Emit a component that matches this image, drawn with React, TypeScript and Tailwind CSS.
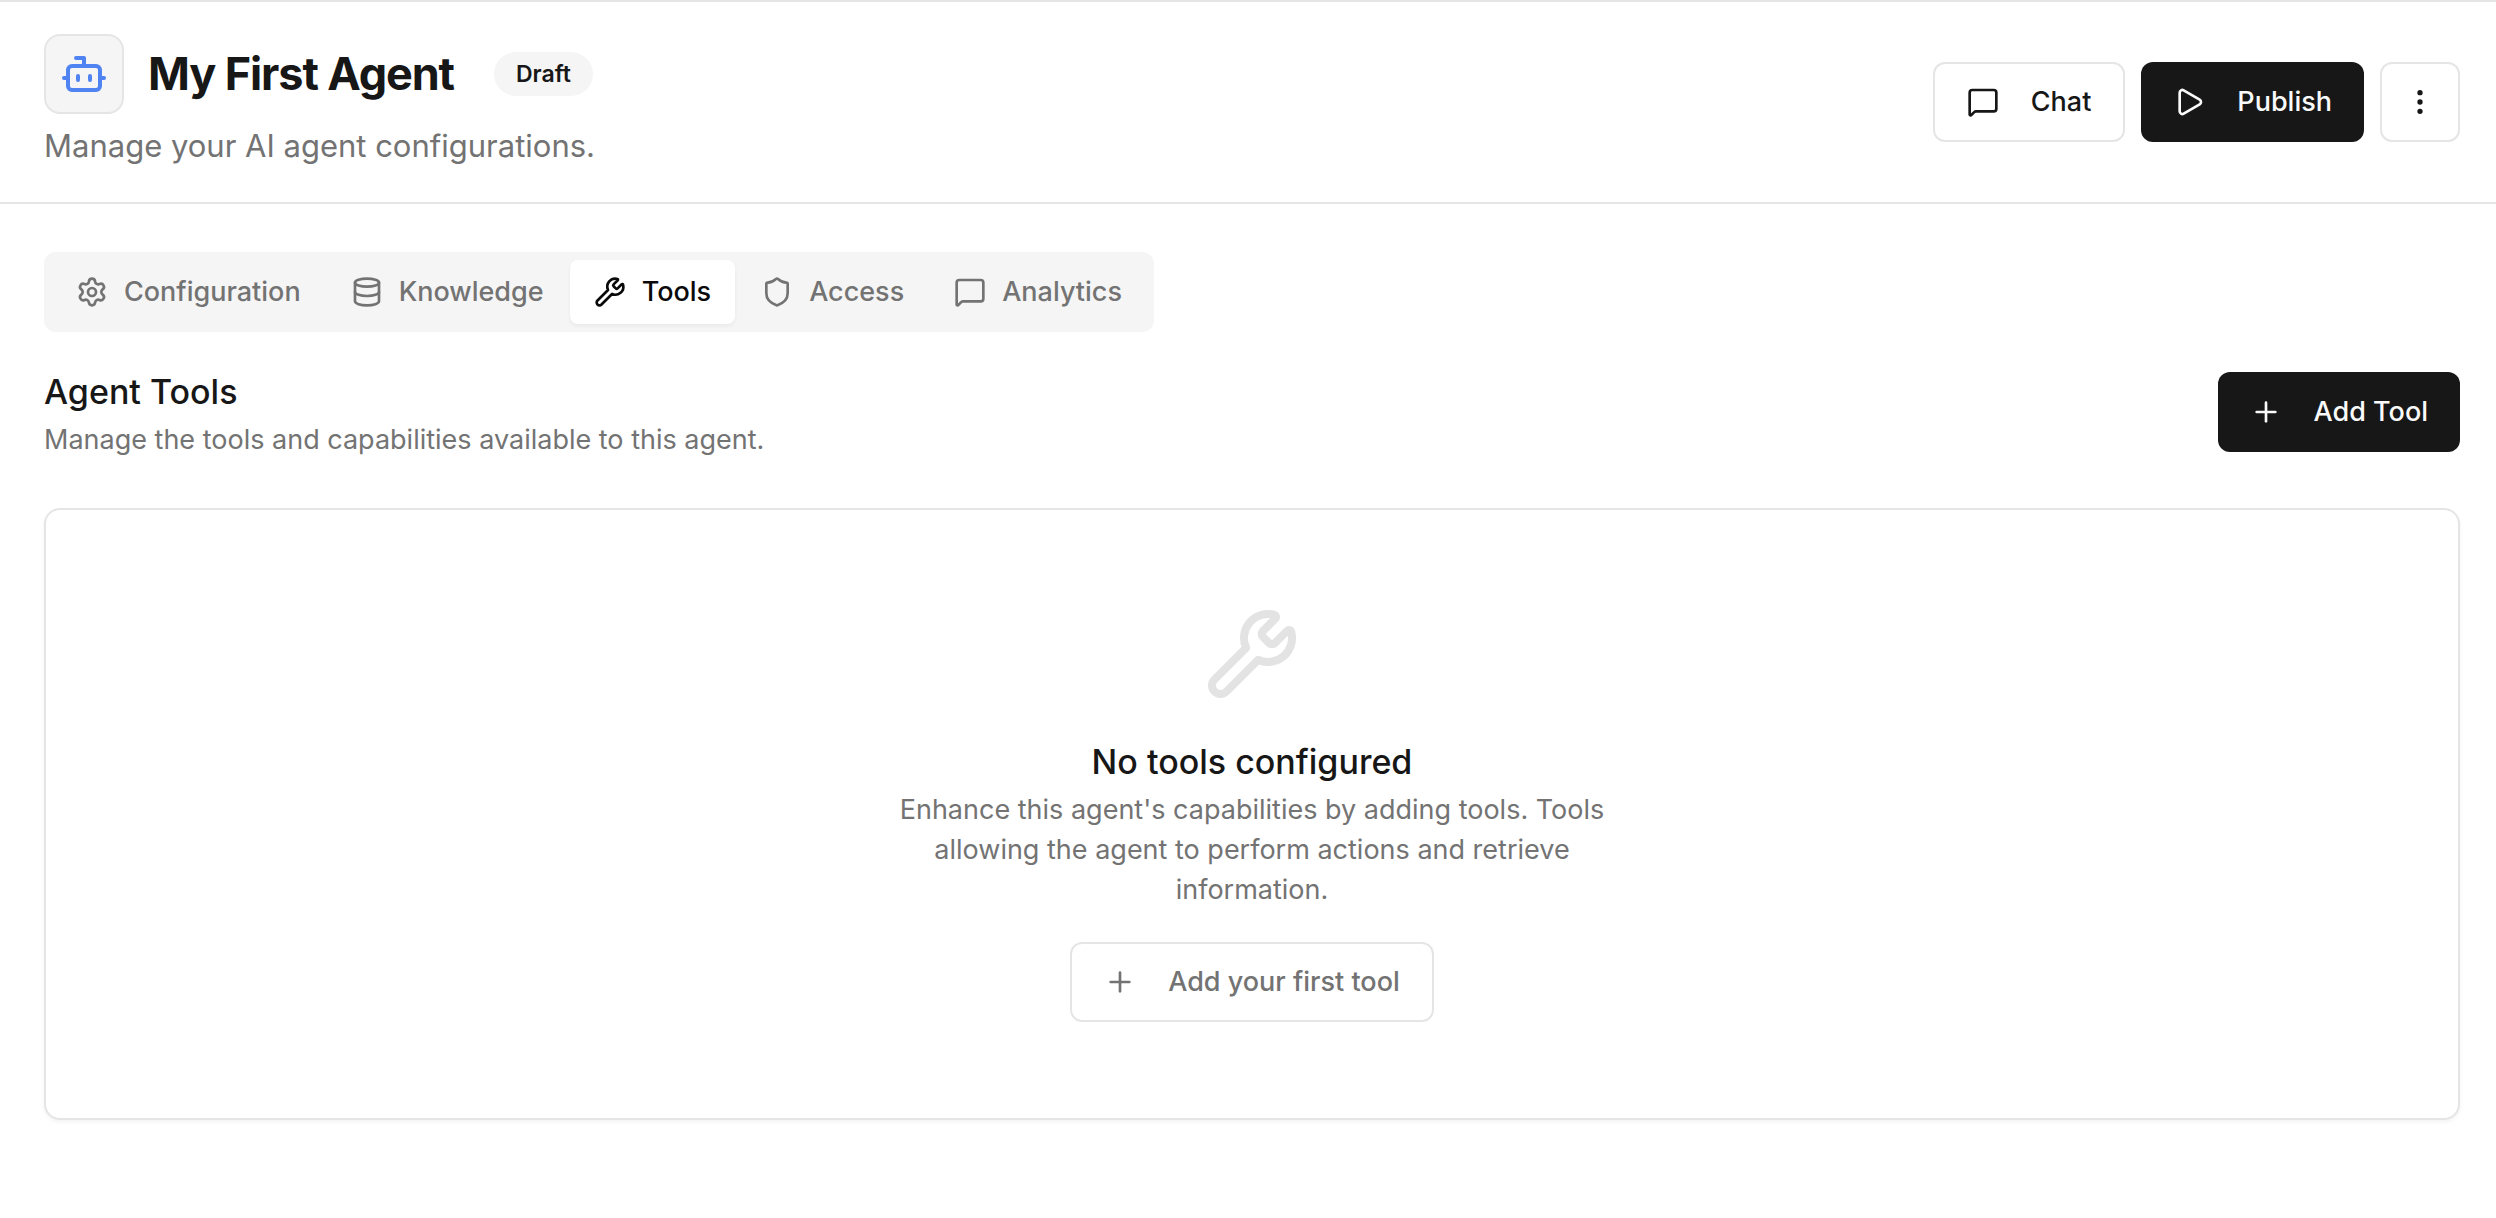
import {
  Bot,
  Database,
  EllipsisVertical,
  MessageSquare,
  Play,
  Plus,
  Settings,
  Shield,
  Wrench,
  type LucideIcon,
} from "lucide-react";
import { useState, type ReactNode } from "react";

type ButtonProps = {
  variant: "primary" | "outline" | "muted";
  icon: LucideIcon;
  children: ReactNode;
};

const buttonStyles = {
  primary: "bg-[#171717] text-neutral-50",
  outline: "border-2 border-[#e5e5e5] bg-white text-[#171717]",
  muted: "border-2 border-[#e5e5e5] bg-white text-[#737373]",
};

function ActionButton({ variant, icon: Icon, children }: ButtonProps) {
  return (
    <button
      type="button"
      className={`inline-flex h-20 items-center justify-center gap-8 rounded-xl px-8 text-[27px] leading-10 font-medium whitespace-nowrap ${buttonStyles[variant]}`}
    >
      <Icon className="size-8 shrink-0" aria-hidden="true" />
      {children}
    </button>
  );
}

const tabs: { label: string; icon: LucideIcon }[] = [
  { label: "Configuration", icon: Settings },
  { label: "Knowledge", icon: Database },
  { label: "Tools", icon: Wrench },
  { label: "Access", icon: Shield },
  { label: "Analytics", icon: MessageSquare },
];

function PageHeader() {
  return (
    <header className="flex items-center justify-between border-y-2 border-[#e5e5e5] py-8 pr-9 pl-11">
      <div className="flex flex-col gap-2">
        <div className="flex items-center gap-6">
          <div className="flex size-20 items-center justify-center rounded-2xl border-2 border-[#e5e5e5] bg-[#f5f5f5]">
            <Bot className="size-12 text-[#4f83f1]" aria-hidden="true" />
          </div>
          <h1 className="text-[45px] leading-16 font-bold tracking-tight text-[#171717]">
            My First Agent
          </h1>
          <span className="ml-4 flex h-11 items-center rounded-full bg-[#f5f5f5] px-[22px] text-[23px] font-semibold text-[#171717]">
            Draft
          </span>
        </div>
        <p className="text-[31px] leading-12 text-[#737373]">
          Manage your AI agent configurations.
        </p>
      </div>
      <div className="flex items-center gap-4">
        <ActionButton variant="outline" icon={MessageSquare}>
          Chat
        </ActionButton>
        <ActionButton variant="primary" icon={Play}>
          Publish
        </ActionButton>
        <button
          type="button"
          aria-label="More options"
          className="flex size-20 items-center justify-center rounded-xl border-2 border-[#e5e5e5] bg-white text-[#171717]"
        >
          <EllipsisVertical className="size-8" aria-hidden="true" />
        </button>
      </div>
    </header>
  );
}

function TabBar() {
  const [active, setActive] = useState("Tools");
  return (
    <div
      role="tablist"
      className="flex h-20 items-center gap-0.5 self-start rounded-xl bg-[#f5f5f5] p-2"
    >
      {tabs.map(({ label, icon: Icon }) => (
        <button
          key={label}
          type="button"
          role="tab"
          aria-selected={active === label}
          onClick={() => setActive(label)}
          className={`flex h-16 items-center gap-4 rounded-lg px-6 text-[27px] leading-10 font-medium ${
            active === label
              ? "bg-white text-[#0a0a0a] shadow-[0_2px_4px_rgba(0,0,0,0.05)]"
              : "text-[#737373]"
          }`}
        >
          <Icon className="size-8 shrink-0" aria-hidden="true" />
          {label}
        </button>
      ))}
    </div>
  );
}

function EmptyState() {
  return (
    <div className="mt-12 flex flex-col items-center rounded-2xl border-2 border-[#e5e5e5] bg-white py-24 text-center shadow-[0_2px_4px_rgba(0,0,0,0.05)]">
      <Wrench className="size-24 text-[#e3e3e3]" aria-hidden="true" />
      <h3 className="mt-8 text-[34px] leading-14 font-medium text-[#171717]">
        No tools configured
      </h3>
      <p className="max-w-3xl text-[27px] leading-10 text-[#737373]">
        Enhance this agent's capabilities by adding tools. Tools allowing the
        agent to perform actions and retrieve information.
      </p>
      <div className="mt-8 flex">
        <ActionButton variant="muted" icon={Plus}>
          Add your first tool
        </ActionButton>
      </div>
    </div>
  );
}

export default function App() {
  return (
    <div className="min-h-screen bg-white font-['Inter',sans-serif]">
      <PageHeader />
      <main className="flex flex-col pt-12 pr-9 pb-12 pl-11">
        <TabBar />
        <section className="mt-8">
          <div className="flex items-center justify-between">
            <div>
              <h2 className="text-[34px] leading-14 font-medium text-[#171717]">
                Agent Tools
              </h2>
              <p className="text-[27px] leading-10 text-[#737373]">
                Manage the tools and capabilities available to this agent.
              </p>
            </div>
            <ActionButton variant="primary" icon={Plus}>
              Add Tool
            </ActionButton>
          </div>
          <EmptyState />
        </section>
      </main>
    </div>
  );
}
